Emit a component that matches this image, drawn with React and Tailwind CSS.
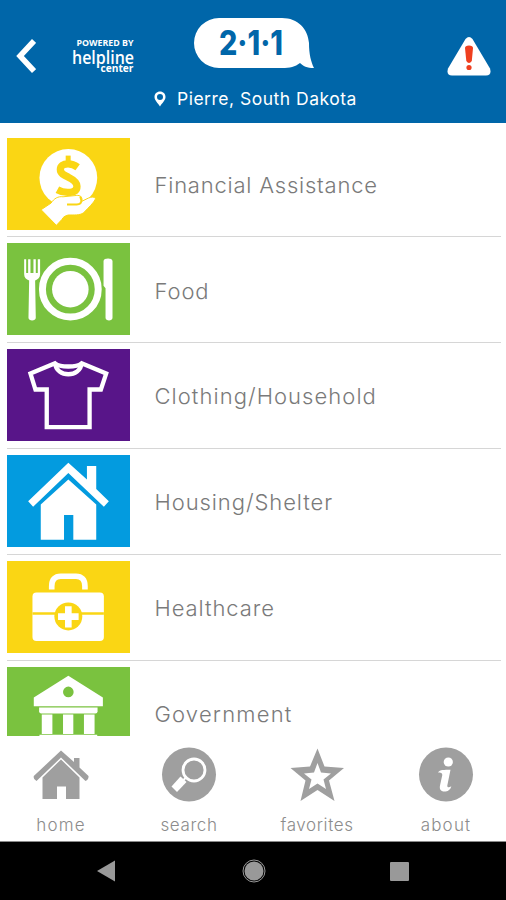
import React from "react";

const MoneyIcon = () => (
  <svg viewBox="22 22 369 277" className="h-full w-full" fill="white">
    <circle cx="206" cy="142" r="87" />
    <path
      d="M234 110C226 104 216 100 205 100C190 100 182 107 182 117C182 129 193 134 206 140C222 148 232 155 232 167C232 180 222 186 204 186C192 186 182 183 173 178"
      fill="none"
      stroke="#fad614"
      strokeWidth="22"
    />
    <path d="M198 75H213V94H198Z" fill="#fad614" />
    <path
      d="M124 238L154 218C163 204 175 197 190 199L230 195C243 193 250 202 246 213L266 203C277 198 285 199 288 205C282 218 268 230 252 247C240 256 221 253 205 254C195 257 189 261 187 267L170 285Z"
      stroke="#fad614"
      strokeWidth="3"
    />
    <path
      d="M202 222H231C242 222 246 217 245 209L242 198"
      fill="none"
      stroke="#fad614"
      strokeWidth="6"
    />
  </svg>
);

const FoodIcon = () => (
  <svg viewBox="22 15 369 277" className="h-full w-full" fill="white">
    <circle cx="212" cy="154" r="84" fill="none" stroke="white" strokeWidth="21" />
    <circle cx="212" cy="154" r="55" />
    <path d="M73 64H79V105H85V64H92V105H101V64H108V105H114V64H121V109C121 119 114 125 106 128L108 240C108 251 86 251 86 240L88 128C79 125 73 119 73 109Z" />
    <path d="M312 69C312 59 339 59 339 69V240C339 251 318 251 318 240V151L312 144Z" />
  </svg>
);

const ShirtIcon = () => (
  <svg
    viewBox="22 15 369 277"
    className="h-full w-full"
    fill="none"
    stroke="white"
    strokeWidth="13"
    strokeLinejoin="miter"
  >
    <path d="M166 58L92 89L107 137H141V250H270V137H304L320 89L246 58C231 71 181 71 166 58Z" />
    <path d="M166 58C170 102 242 102 246 58" />
  </svg>
);

const HouseIcon = () => (
  <svg viewBox="22 15 369 277" className="h-full w-full" fill="white">
    <path d="M206 38L262 89V48H290V117L328 154L313 171L206 69L100 171L85 154Z" />
    <path d="M206 89L290 164V270H221V196H193V270H123V164Z" />
  </svg>
);

const HealthIcon = () => (
  <svg viewBox="22 15 369 277" className="h-full w-full" fill="white">
    <path
      d="M156 101V91C156 71 166 61 183 61H229C246 61 256 71 256 91V101"
      fill="none"
      stroke="white"
      strokeWidth="17"
    />
    <rect x="98" y="110" width="215" height="146" rx="12" />
    <path d="M98 173H313" stroke="#fad614" strokeWidth="7" />
    <circle cx="206" cy="182" r="42" fill="#fad614" />
    <path d="M196 151H216V172H237V193H216V215H196V193H175V172H196Z" />
  </svg>
);

const GovernmentIcon = () => (
  <svg viewBox="22 35 369 277" className="h-full w-full" fill="white">
    <path
      fillRule="evenodd"
      d="M206 61L310 127V153H102V127ZM206 94A16 16 0 1 0 206 126A16 16 0 1 0 206 94Z"
    />
    <path d="M118 157H294V168Q294 175 287 175H125Q118 175 118 168Z" />
    <path d="M126 178H158V237H126ZM190 178H221V237H190ZM253 178H285V237H253Z" />
    <path d="M119 239H293V260H119Z" />
  </svg>
);

const categories = [
  {
    name: "Financial Assistance",
    color: "bg-[#fad614]",
    tracking: "tracking-[0.78px]",
    icon: <MoneyIcon />,
  },
  {
    name: "Food",
    color: "bg-[#7ac23f]",
    tracking: "tracking-[0.9px]",
    icon: <FoodIcon />,
  },
  {
    name: "Clothing/Household",
    color: "bg-[#581589]",
    tracking: "tracking-[1.05px]",
    icon: <ShirtIcon />,
  },
  {
    name: "Housing/Shelter",
    color: "bg-[#039bdf]",
    tracking: "tracking-[0.92px]",
    icon: <HouseIcon />,
  },
  {
    name: "Healthcare",
    color: "bg-[#fad614]",
    tracking: "tracking-[0.9px]",
    icon: <HealthIcon />,
  },
  {
    name: "Government",
    color: "bg-[#7ac23f]",
    tracking: "tracking-[1.2px]",
    icon: <GovernmentIcon />,
  },
];

const tabs = [
  {
    name: "home",
    width: "w-[122px]",
    tracking: "tracking-[1.2px]",
    icon: (
      <svg viewBox="0 0 56 56" className="h-14 w-14" fill="#9f9f9f">
        <path d="M28 3.5L41 15V11H46.500V20.500L55.500 29Q56 32.500 52.500 34L28 10.500L3.500 34Q0 32.500 .8 29Z" />
        <path d="M28 12.500L46.500 30.500V52H33V39.500H24V52H9.500V30.500Z" />
      </svg>
    ),
  },
  {
    name: "search",
    width: "w-[134px]",
    tracking: "tracking-[0.6px]",
    icon: (
      <svg viewBox="0 0 56 56" className="h-14 w-14">
        <circle cx="28" cy="27.500" r="27" fill="#9f9f9f" />
        <circle cx="33" cy="23" r="11" fill="none" stroke="white" strokeWidth="2.800" />
        <path d="M19.500 29.500L25.500 35L16 45L10.500 39.500Z" fill="white" />
        <path d="M22.500 33L26 29.500" stroke="white" strokeWidth="2" />
      </svg>
    ),
  },
  {
    name: "favorites",
    width: "w-[122px]",
    tracking: "tracking-[0.6px]",
    icon: (
      <svg viewBox="0 0 56 56" className="h-14 w-14">
        <path
          fill="#9f9f9f"
          fillRule="evenodd"
          d="M28.500 1.500L35.500 19.500L55 21L40 33.500L45.500 54L28.500 43L11.500 54L16.500 33.500L1.500 21L21 19.500ZM28.500 16L25 25.500L15 26.500L22.500 32.500L20 42L28.500 36.500L37 42L34.500 32.500L42 26.500L32 25.500Z"
        />
      </svg>
    ),
  },
  {
    name: "about",
    width: "w-[128px] pl-2",
    tracking: "tracking-[1.2px]",
    icon: (
      <svg viewBox="0 0 56 56" className="h-14 w-14">
        <circle cx="28" cy="27.500" r="27" fill="#9f9f9f" />
        <circle cx="30.300" cy="15" r="4.600" fill="white" />
        <path
          d="M20 25.500C22 22.500 26 23 32.500 22.800L29.300 38.500C29 41 31.500 40.500 33.300 39.200C32.500 43 29.500 44.500 26.500 44.500C22.500 44.500 21.300 42 22 38.500L24.300 28C24.500 26 22.500 25.500 20 25.500Z"
          fill="white"
        />
      </svg>
    ),
  },
];

const Header = () => (
  <header className="flex h-[123px] flex-col bg-[#0066a9] pt-[18px] text-white">
    <div className="flex h-[58px] items-start pl-4 pr-[15px]">
      <svg viewBox="0 0 20 34" className="mt-[21px] h-[34px] w-5">
        <path d="M18 2L4 17L18 32" fill="none" stroke="white" strokeWidth="5.500" />
      </svg>
      <svg
        viewBox="0 0 64 36"
        className="ml-[35px] mt-5 h-9 w-16 overflow-visible font-['Open_Sans',sans-serif]"
        fill="white"
      >
        <text
          x="5.500"
          y="8"
          fontSize="8"
          fontWeight="700"
          textLength="57"
          lengthAdjust="spacingAndGlyphs"
        >
          POWERED BY
        </text>
        <text
          x="1"
          y="26"
          fontSize="18"
          fontWeight="600"
          textLength="62"
          lengthAdjust="spacingAndGlyphs"
        >
          helpline
        </text>
        <text
          x="29.500"
          y="33.500"
          fontSize="10.500"
          fontWeight="700"
          textLength="33"
          lengthAdjust="spacingAndGlyphs"
          stroke="#0066a9"
          strokeWidth="1"
          paintOrder="stroke"
        >
          center
        </text>
      </svg>
      <svg viewBox="0 0 120 50" className="ml-[59px] h-[50px] w-[120px]">
        <path
          d="M25 0H88C104 0 114 11 115 25C115 36 117 44 120 50C113 50 109 48 106 45C101 49 96 50 88 50H25A25 25 0 0 1 25 0Z"
          fill="white"
        />
        <text
          x="25"
          y="37"
          fontSize="33.500"
          fontWeight="800"
          textLength="64"
          lengthAdjust="spacingAndGlyphs"
          fill="#0066a9"
          className="font-['Inter',sans-serif]"
        >
          2·1·1
        </text>
      </svg>
      <svg viewBox="0 0 44 40" className="ml-auto mt-[18px] h-10 w-11">
        <path
          d="M18.500 3Q22 -1 25.500 3L43 32.500Q45 39.500 39 39.500H5Q-1 39.500 1 32.500Z"
          fill="white"
        />
        <path
          d="M18 12Q18 9.500 22 9.500T26 12L24.800 25Q22 29 19.300 25Z"
          fill="#ef3f1f"
        />
        <circle cx="22" cy="31.500" r="2.600" fill="#ef3f1f" />
      </svg>
    </div>
    <div className="flex h-[46px] items-center gap-[11px] pl-[154px]">
      <svg viewBox="0 0 12 16" className="h-4 w-3">
        <path
          fill="white"
          fillRule="evenodd"
          d="M6 .5C2.800 .5 .5 2.800 .5 6C.5 9.500 4 12 6 15.500C8 12 11.500 9.500 11.500 6C11.500 2.800 9.200 .5 6 .5ZM6 3A3 3 0 1 1 6 9A3 3 0 1 1 6 3Z"
        />
      </svg>
      <span className="whitespace-nowrap text-[17.5px] leading-6 tracking-[0.5px]">
        Pierre, South Dakota
      </span>
    </div>
  </header>
);

const App = () => {
  return (
    <div className="flex h-[900px] w-[506px] flex-col overflow-hidden bg-white font-['Inter',sans-serif]">
      <Header />
      <main className="h-[613px] overflow-hidden pl-[7px] pr-[5px] pt-[14.6px]">
        {categories.map((item) => (
          <div key={item.name} className="h-[105.8px]">
            <div className="flex h-[99.8px] items-start border-b-[1.5px] border-[#d6d6d6]">
              <div className={`h-[92px] w-[123px] shrink-0 ${item.color}`}>
                {item.icon}
              </div>
              <span
                className={`ml-[24.5px] flex h-[95.5px] items-center whitespace-nowrap text-[22px] font-light text-[#7a7a7a] ${item.tracking}`}
              >
                {item.name}
              </span>
            </div>
          </div>
        ))}
      </main>
      <nav className="flex h-[105px] bg-white pt-[11px]">
        {tabs.map((tab) => (
          <div
            key={tab.name}
            className={`flex shrink-0 flex-col items-center ${tab.width}`}
          >
            {tab.icon}
            <span
              className={`mt-2.5 text-[17px] font-light leading-6 text-[#8c8c8c] ${tab.tracking}`}
            >
              {tab.name}
            </span>
          </div>
        ))}
      </nav>
      <footer className="flex h-[59px] items-center border-t border-[#8a8a8a] bg-black">
        <svg viewBox="0 0 18 22" className="ml-[97px] h-[22px] w-[18px]">
          <path d="M0 11L18 .5V21.500Z" fill="#999" />
        </svg>
        <svg viewBox="0 0 24 24" className="ml-[127px] h-6 w-6">
          <circle cx="12" cy="12" r="9.500" fill="#999" />
          <circle cx="12" cy="12" r="11" fill="none" stroke="#999" />
        </svg>
        <div className="ml-[124px] h-[19px] w-[19px] rounded-[1px] bg-[#999]" />
      </footer>
    </div>
  );
};

export default App;
